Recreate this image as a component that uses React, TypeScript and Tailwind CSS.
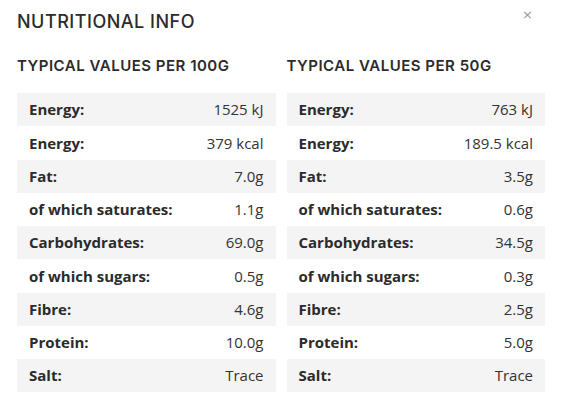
const per100 = [
  ['Energy:', '1525 kJ'],
  ['Energy:', '379 kcal'],
  ['Fat:', '7.0g'],
  ['of which saturates:', '1.1g'],
  ['Carbohydrates:', '69.0g'],
  ['of which sugars:', '0.5g'],
  ['Fibre:', '4.6g'],
  ['Protein:', '10.0g'],
  ['Salt:', 'Trace'],
];

const per50 = [
  ['Energy:', '763 kJ'],
  ['Energy:', '189.5 kcal'],
  ['Fat:', '3.5g'],
  ['of which saturates:', '0.6g'],
  ['Carbohydrates:', '34.5g'],
  ['of which sugars:', '0.3g'],
  ['Fibre:', '2.5g'],
  ['Protein:', '5.0g'],
  ['Salt:', 'Trace'],
];

function NutritionTable({ title, rows }: { title: string; rows: string[][] }) {
  return (
    <div className="flex flex-col">
      <h3 className="font-['Inter',sans-serif] text-[15px] font-semibold tracking-[0.5px] text-[#2b2b2b] h-[25px] leading-[25px] mt-[53px] mb-[15px]">
        {title}
      </h3>
      <div className="flex flex-col font-['Open_Sans',sans-serif] text-[15px] text-[#2b2b2b]">
        {rows.map(([label, value], i) => (
          <div
            key={i}
            className={`flex h-[33.25px] items-center justify-between pl-3 pr-3 ${
              i % 2 === 0 ? 'bg-[#f4f4f4]' : 'bg-white'
            }`}
          >
            <span className="font-bold">{label}</span>
            <span className="text-[#333]">{value}</span>
          </div>
        ))}
      </div>
    </div>
  );
}

export default function App() {
  return (
    <div className="relative w-[569px] h-[415px] bg-white pl-[17px] pr-[24px]">
      {/* Header */}
      <h2 className="absolute left-[17px] top-[8px] font-['Inter',sans-serif] text-[18px] font-medium tracking-[0.5px] text-[#2b2b2b]">
        NUTRITIONAL INFO
      </h2>
      <button className="absolute left-[522px] top-[8px] text-[#999] text-[13px] leading-none font-['DejaVu_Sans',sans-serif]">
        ×
      </button>

      {/* Tables */}
      <div className="grid grid-cols-2 gap-[11px]">
        <NutritionTable title="TYPICAL VALUES PER 100G" rows={per100} />
        <NutritionTable title="TYPICAL VALUES PER 50G" rows={per50} />
      </div>
    </div>
  );
}
